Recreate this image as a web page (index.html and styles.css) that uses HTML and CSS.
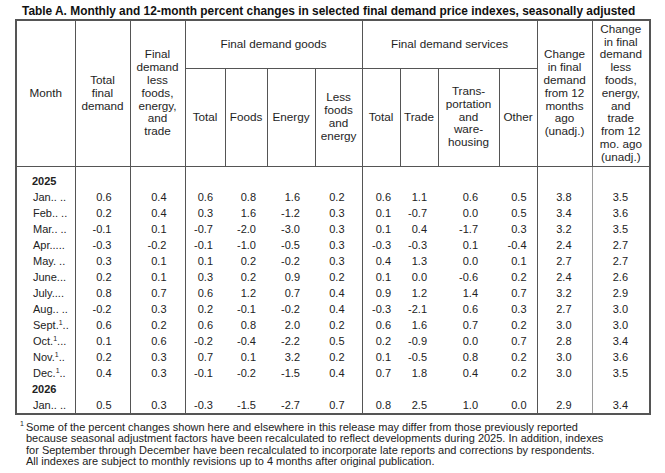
FILE: index.html
```html
<!DOCTYPE html>
<html>
<head>
<meta charset="utf-8">
<link rel="stylesheet" href="styles.css">
</head>
<body>
<div class="page">
  <h1 class="title">Table A. Monthly and 12-month percent changes in selected final demand price indexes, seasonally adjusted</h1>
  <table class="ppi">
    <colgroup>
      <col class="w-month"><col class="w-55"><col class="w-55">
      <col class="w-40"><col class="w-42"><col class="w-48"><col class="w-47">
      <col class="w-38"><col class="w-38"><col class="w-61"><col class="w-38">
      <col class="w-55"><col class="w-58">
    </colgroup>
    <thead>
      <tr class="hrow1">
        <th rowspan="2">Month</th>
        <th rowspan="2">Total<br>final<br>demand</th>
        <th rowspan="2">Final<br>demand<br>less<br>foods,<br>energy,<br>and<br>trade</th>
        <th colspan="4">Final demand goods</th>
        <th colspan="4">Final demand services</th>
        <th rowspan="2">Change<br>in final<br>demand<br>from 12<br>months<br>ago<br>(unadj.)</th>
        <th rowspan="2">Change<br>in final<br>demand<br>less<br>foods,<br>energy,<br>and<br>trade<br>from 12<br>mo. ago<br>(unadj.)</th>
      </tr>
      <tr class="hrow2">
        <th>Total</th>
        <th>Foods</th>
        <th>Energy</th>
        <th>Less<br>foods<br>and<br>energy</th>
        <th>Total</th>
        <th>Trade</th>
        <th>Trans-<br>portation<br>and<br>ware-<br>housing</th>
        <th>Other</th>
      </tr>
    </thead>
    <tbody>
      <tr class="yr first"><td class="m">2025</td><td></td><td></td><td></td><td></td><td></td><td></td><td></td><td></td><td></td><td></td><td></td><td></td></tr>
      <tr><td class="m">Jan.. ..</td><td>0.6</td><td>0.4</td><td>0.6</td><td>0.8</td><td>1.6</td><td>0.2</td><td>0.6</td><td>1.1</td><td>0.6</td><td>0.5</td><td>3.8</td><td>3.5</td></tr>
      <tr><td class="m">Feb.. ..</td><td>0.2</td><td>0.4</td><td>0.3</td><td>1.6</td><td>-1.2</td><td>0.3</td><td>0.1</td><td>-0.7</td><td>0.0</td><td>0.5</td><td>3.4</td><td>3.6</td></tr>
      <tr><td class="m">Mar.. ..</td><td>-0.1</td><td>0.1</td><td>-0.7</td><td>-2.0</td><td>-3.0</td><td>0.3</td><td>0.1</td><td>0.4</td><td>-1.7</td><td>0.3</td><td>3.2</td><td>3.5</td></tr>
      <tr><td class="m">Apr.....</td><td>-0.3</td><td>-0.2</td><td>-0.1</td><td>-1.0</td><td>-0.5</td><td>0.3</td><td>-0.3</td><td>-0.3</td><td>0.1</td><td>-0.4</td><td>2.4</td><td>2.7</td></tr>
      <tr><td class="m">May. ..</td><td>0.3</td><td>0.1</td><td>0.1</td><td>0.2</td><td>-0.2</td><td>0.3</td><td>0.4</td><td>1.3</td><td>0.0</td><td>0.1</td><td>2.7</td><td>2.7</td></tr>
      <tr><td class="m">June...</td><td>0.2</td><td>0.1</td><td>0.3</td><td>0.2</td><td>0.9</td><td>0.2</td><td>0.1</td><td>0.0</td><td>-0.6</td><td>0.2</td><td>2.4</td><td>2.6</td></tr>
      <tr><td class="m">July....</td><td>0.8</td><td>0.7</td><td>0.6</td><td>1.2</td><td>0.7</td><td>0.4</td><td>0.9</td><td>1.2</td><td>1.4</td><td>0.7</td><td>3.2</td><td>2.9</td></tr>
      <tr><td class="m">Aug.. ..</td><td>-0.2</td><td>0.3</td><td>0.2</td><td>-0.1</td><td>-0.2</td><td>0.4</td><td>-0.3</td><td>-2.1</td><td>0.6</td><td>0.3</td><td>2.7</td><td>3.0</td></tr>
      <tr><td class="m">Sept.<sup>1</sup>..</td><td>0.6</td><td>0.2</td><td>0.6</td><td>0.8</td><td>2.0</td><td>0.2</td><td>0.6</td><td>1.6</td><td>0.7</td><td>0.2</td><td>3.0</td><td>3.0</td></tr>
      <tr><td class="m">Oct.<sup>1</sup>...</td><td>0.1</td><td>0.6</td><td>-0.2</td><td>-0.4</td><td>-2.2</td><td>0.5</td><td>0.2</td><td>-0.9</td><td>0.0</td><td>0.7</td><td>2.8</td><td>3.4</td></tr>
      <tr><td class="m">Nov.<sup>1</sup>..</td><td>0.2</td><td>0.3</td><td>0.7</td><td>0.1</td><td>3.2</td><td>0.2</td><td>0.1</td><td>-0.5</td><td>0.8</td><td>0.2</td><td>3.0</td><td>3.6</td></tr>
      <tr><td class="m">Dec.<sup>1</sup>..</td><td>0.4</td><td>0.3</td><td>-0.1</td><td>-0.2</td><td>-1.5</td><td>0.4</td><td>0.7</td><td>1.8</td><td>0.4</td><td>0.2</td><td>3.0</td><td>3.5</td></tr>
      <tr class="yr"><td class="m">2026</td><td></td><td></td><td></td><td></td><td></td><td></td><td></td><td></td><td></td><td></td><td></td><td></td></tr>
      <tr><td class="m">Jan.. ..</td><td>0.5</td><td>0.3</td><td>-0.3</td><td>-1.5</td><td>-2.7</td><td>0.7</td><td>0.8</td><td>2.5</td><td>1.0</td><td>0.0</td><td>2.9</td><td>3.4</td></tr>
    </tbody>
  </table>
  <p class="note"><sup class="note-mark">1</sup>Some of the percent changes shown here and elsewhere in this release may differ from those previously reported<br>because seasonal adjustment factors have been recalculated to reflect developments during 2025. In addition, indexes<br>for September through December have been recalculated to incorporate late reports and corrections by respondents.<br>All indexes are subject to monthly revisions up to 4 months after original publication.</p>
</div>
</body>
</html>
```

FILE: styles.css
```css
html, body {
  margin: 0;
  padding: 0;
  background: #ffffff;
}

body {
  font-family: "Liberation Sans", Arial, Helvetica, sans-serif;
  color: #1a1a1a;
}

.page {
  width: 665px;
  padding: 5px 0 0 15px;
  box-sizing: border-box;
}

.title {
  margin: 0 0 0 7px;
  font-size: 11.9px;
  font-weight: bold;
  line-height: 13px;
  height: 14px;
  white-space: nowrap;
  color: #111;
}

.ppi {
  border-collapse: collapse;
  table-layout: fixed;
  width: 635px;
  border: 2px solid #555;
}

.w-month { width: 59px; }
.w-40 { width: 40px; }
.w-42 { width: 42px; }
.w-47 { width: 47px; }
.w-48 { width: 48px; }
.w-38 { width: 38px; }
.w-55 { width: 55px; }
.w-58 { width: 58px; }
.w-61 { width: 61px; }

.ppi th {
  font-weight: normal;
  font-size: 11.7px;
  line-height: 12.8px;
  text-align: center;
  vertical-align: middle;
  border: 1px solid #555;
  padding: 0;
  color: #1e1e1e;
}

.hrow1 { height: 48px; }
.hrow2 { height: 98px; }

.ppi td {
  font-size: 11px;
  line-height: 16px;
  height: 16px;
  padding: 0;
  text-align: right;
  border: none;
  white-space: nowrap;
  color: #222;
}

.ppi td.m {
  text-align: left;
  padding-left: 16px;
}

.ppi tr.yr td.m {
  font-weight: bold;
  padding-left: 15px;
}

.ppi tr.first td {
  height: 22px;
  vertical-align: bottom;
}

.ppi td sup {
  font-size: 7px;
  line-height: 0;
  vertical-align: 4px;
}

.ppi td:nth-child(1),
.ppi td:nth-child(2),
.ppi td:nth-child(3),
.ppi td:nth-child(7),
.ppi td:nth-child(11) {
  border-right: 1px solid #555;
}

.ppi td:nth-child(12) {
  border-right: 1px solid #9a9a9a;
}

.ppi td:nth-child(2) { padding-right: 18px; }
.ppi td:nth-child(3) { padding-right: 18px; }
.ppi td:nth-child(4) { padding-right: 12px; }
.ppi td:nth-child(5) { padding-right: 11px; }
.ppi td:nth-child(6) { padding-right: 15px; }
.ppi td:nth-child(7) { padding-right: 17px; }
.ppi td:nth-child(8) { padding-right: 9px; }
.ppi td:nth-child(9) { padding-right: 11px; }
.ppi td:nth-child(10) { padding-right: 21px; }
.ppi td:nth-child(11) { padding-right: 10px; }
.ppi td:nth-child(12) { padding-right: 20px; }
.ppi td:nth-child(13) { padding-right: 21px; }

.note {
  position: relative;
  margin: 7px 0 0 0;
  padding-left: 11px;
  font-size: 11px;
  line-height: 11.5px;
  white-space: nowrap;
  color: #222;
}

.note-mark {
  position: absolute;
  left: 5px;
  top: -2px;
  font-size: 7px;
  line-height: 8px;
}
```
